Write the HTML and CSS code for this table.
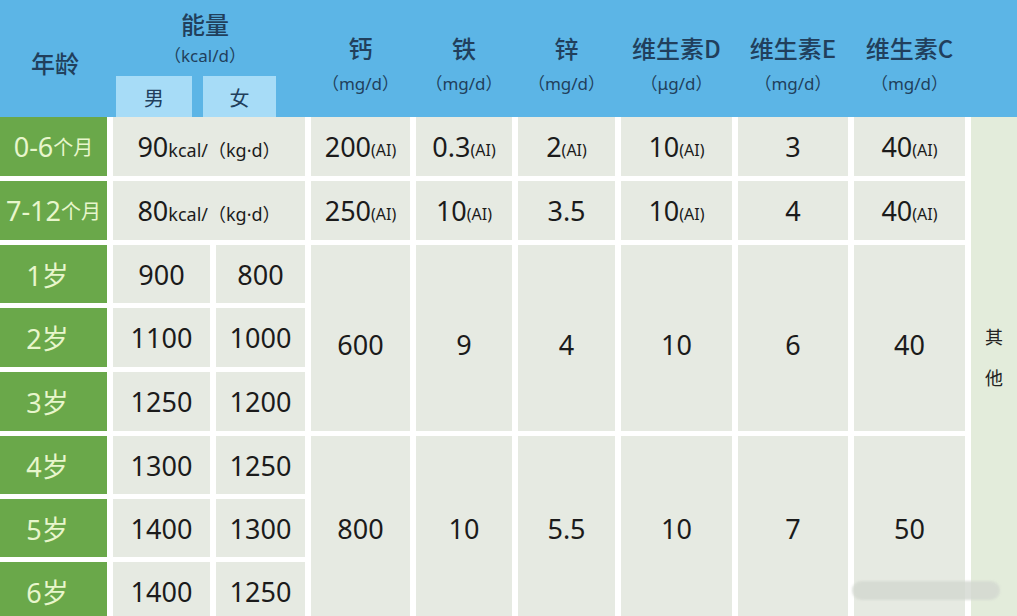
FILE: index.html
```html
<!DOCTYPE html>
<html lang="zh-CN">
<head>
<meta charset="utf-8">
<title>儿童营养素推荐摄入量</title>
<link rel="stylesheet" href="styles.css">
</head>
<body>
<div class="page">
  <div class="head">
    <div class="h-age">年龄</div>
    <div class="h-energy">
      <div class="h-title">能量</div>
      <div class="h-unit">（kcal/d）</div>
      <div class="sex-row">
        <div class="sex sex-m">男</div>
        <div class="sex sex-f">女</div>
      </div>
    </div>
    <div class="h-col"><div class="h-title">钙</div><div class="h-unit">（mg/d）</div></div>
    <div class="h-col"><div class="h-title">铁</div><div class="h-unit">（mg/d）</div></div>
    <div class="h-col"><div class="h-title">锌</div><div class="h-unit">（mg/d）</div></div>
    <div class="h-col"><div class="h-title">维生素D</div><div class="h-unit">（μg/d）</div></div>
    <div class="h-col"><div class="h-title">维生素E</div><div class="h-unit">（mg/d）</div></div>
    <div class="h-col"><div class="h-title">维生素C</div><div class="h-unit">（mg/d）</div></div>
    <div class="h-other"></div>
  </div>

  <div class="body">
    <!-- row 1 -->
    <div class="age">0-6<span class="mo">个月</span></div>
    <div class="cell span2">90<span class="kc">kcal/（kg·d）</span></div>
    <div class="cell">200<span class="ai">(AI)</span></div>
    <div class="cell">0.3<span class="ai">(AI)</span></div>
    <div class="cell">2<span class="ai">(AI)</span></div>
    <div class="cell">10<span class="ai">(AI)</span></div>
    <div class="cell">3</div>
    <div class="cell">40<span class="ai">(AI)</span></div>
    <div class="other"><span>其</span><span>他</span></div>
    <!-- row 2 -->
    <div class="age">7-12<span class="mo">个月</span></div>
    <div class="cell span2">80<span class="kc">kcal/（kg·d）</span></div>
    <div class="cell">250<span class="ai">(AI)</span></div>
    <div class="cell">10<span class="ai">(AI)</span></div>
    <div class="cell">3.5</div>
    <div class="cell">10<span class="ai">(AI)</span></div>
    <div class="cell">4</div>
    <div class="cell">40<span class="ai">(AI)</span></div>
    <!-- row 3 -->
    <div class="age age-y">1岁</div>
    <div class="cell">900</div>
    <div class="cell">800</div>
    <div class="cell merge merge-a">600</div>
    <div class="cell merge merge-a">9</div>
    <div class="cell merge merge-a">4</div>
    <div class="cell merge merge-a">10</div>
    <div class="cell merge merge-a">6</div>
    <div class="cell merge merge-a">40</div>
    <!-- row 4 -->
    <div class="age age-y">2岁</div>
    <div class="cell">1100</div>
    <div class="cell">1000</div>
    <!-- row 5 -->
    <div class="age age-y">3岁</div>
    <div class="cell">1250</div>
    <div class="cell">1200</div>
    <!-- row 6 -->
    <div class="age age-y">4岁</div>
    <div class="cell">1300</div>
    <div class="cell">1250</div>
    <div class="cell merge">800</div>
    <div class="cell merge">10</div>
    <div class="cell merge">5.5</div>
    <div class="cell merge">10</div>
    <div class="cell merge">7</div>
    <div class="cell merge">50</div>
    <!-- row 7 -->
    <div class="age age-y">5岁</div>
    <div class="cell">1400</div>
    <div class="cell">1300</div>
    <!-- row 8 -->
    <div class="age age-y">6岁</div>
    <div class="cell">1400</div>
    <div class="cell">1250</div>
  </div>
  <div class="mark"></div>
</div>
</body>
</html>
```

FILE: styles.css
```css
html, body {
  margin: 0;
  padding: 0;
  background: #ffffff;
  overflow: hidden;
}

.page {
  width: 1017px;
  height: 616px;
  overflow: hidden;
  font-family: "Noto Sans", "Noto Sans CJK SC", sans-serif;
  color: #1b1b1b;
}

.head,
.body {
  display: grid;
  grid-template-columns: 107px 97px 89px 99px 96px 97px 111px 110px 111px 46px;
  column-gap: 6px;
}

/* ---------- header ---------- */
.head {
  height: 117px;
  background: #5cb5e6;
  color: #213f5c;
  font-family: "Noto Sans CJK SC", "Noto Sans", sans-serif;
}

.h-age {
  display: flex;
  align-items: center;
  justify-content: center;
  padding-top: 8px;
  padding-left: 3px;
  font-size: 24px;
  font-weight: 500;
}

.h-energy {
  grid-column: span 2;
  display: flex;
  flex-direction: column;
  align-items: center;
  padding-top: 9px;
}

.h-energy .h-title,
.h-energy .h-unit {
  padding-right: 8px;
}

.h-title {
  font-size: 24px;
  font-weight: 500;
  line-height: 30px;
  white-space: nowrap;
}

.h-unit {
  font-family: "Noto Sans", "Noto Sans CJK SC", sans-serif;
  font-size: 17px;
  line-height: 24px;
  margin-top: 5px;
  white-space: nowrap;
}

.sex-row {
  margin-top: auto;
  align-self: stretch;
  display: flex;
  gap: 11px;
  padding-left: 3px;
}

.sex {
  height: 41px;
  background: #a7dcf7;
  display: flex;
  align-items: center;
  justify-content: center;
  padding-top: 2px;
  box-sizing: border-box;
  font-size: 20px;
}

.sex-m { width: 76px; }
.sex-f { width: 73px; }

.h-col {
  display: flex;
  flex-direction: column;
  align-items: center;
  padding-top: 33px;
}

.h-col .h-unit {
  margin-top: 9px;
}

/* ---------- body ---------- */
.body {
  grid-template-rows: 59px 59px 58px 59px 59px 58px 58px 58px;
  row-gap: 5px;
  background: #ffffff;
}

.age {
  background: #6aa84a;
  color: #e8f6cc;
  display: flex;
  align-items: center;
  justify-content: center;
  font-size: 27px;
  white-space: nowrap;
  font-family: "Noto Sans", "Noto Sans CJK SC", sans-serif;
}

.age-y {
  padding-right: 12px;
}

.mo {
  font-size: 20px;
  font-family: "Noto Sans CJK SC", sans-serif;
}

.cell {
  background: #e6eae2;
  display: flex;
  align-items: center;
  justify-content: center;
  font-size: 27px;
  white-space: nowrap;
}

.span2 {
  grid-column: span 2;
}

.kc {
  font-size: 18px;
  font-family: "Noto Sans", "Noto Sans CJK SC", sans-serif;
  margin-top: 4px;
}

.ai {
  font-size: 16px;
  align-self: center;
  margin-top: 6px;
}

.merge {
  grid-row: span 3;
}

.merge-a {
  padding-top: 12px;
}

.other {
  grid-row: span 8;
  background: #e3ecdb;
  display: flex;
  flex-direction: column;
  align-items: center;
  justify-content: center;
  padding-bottom: 24px;
  font-family: "Noto Sans CJK SC", sans-serif;
  font-size: 18px;
  line-height: 41px;
  color: #222;
}

/* faded watermark in the corner */
.mark {
  position: absolute;
  left: 852px;
  top: 581px;
  width: 148px;
  height: 19px;
  border-radius: 10px;
  background: #d3d8d0;
  opacity: 0.8;
  filter: blur(1px);
}
```
